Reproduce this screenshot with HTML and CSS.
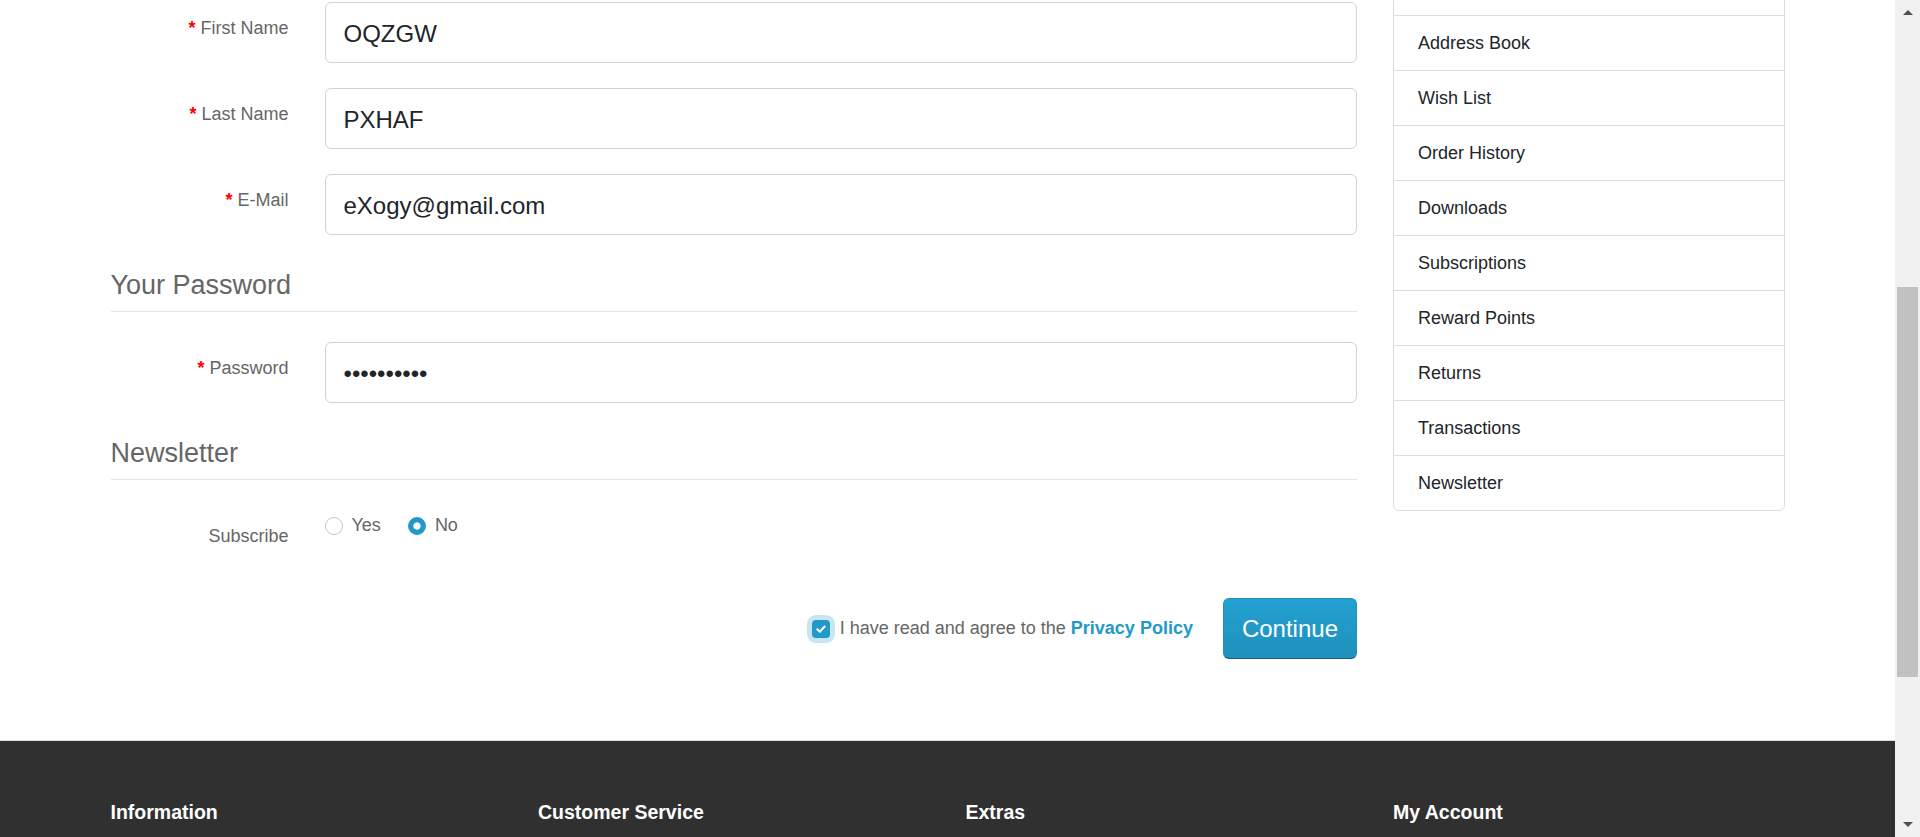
FILE: index.html
```html
<!DOCTYPE html>
<html lang="en">
<head>
<meta charset="utf-8">
<title>Register Account</title>
<link rel="stylesheet" href="styles.css">
</head>
<body>
<div class="screen">
  <div class="page">
    <div class="container">
      <div class="layout">
        <div class="content">
          <form class="form">
            <div class="form-row required">
              <label class="col-label" for="input-firstname">First Name</label>
              <div class="col-field"><input id="input-firstname" class="form-control" type="text" value="OQZGW"></div>
            </div>
            <div class="form-row required">
              <label class="col-label" for="input-lastname">Last Name</label>
              <div class="col-field"><input id="input-lastname" class="form-control" type="text" value="PXHAF"></div>
            </div>
            <div class="form-row required">
              <label class="col-label" for="input-email">E-Mail</label>
              <div class="col-field"><input id="input-email" class="form-control" type="text" value="eXogy@gmail.com"></div>
            </div>

            <h2 class="legend">Your Password</h2>
            <div class="form-row required">
              <label class="col-label" for="input-password">Password</label>
              <div class="col-field"><input id="input-password" class="form-control" type="password" value="abcdefghij"></div>
            </div>

            <h2 class="legend">Newsletter</h2>
            <div class="form-row form-row-radio">
              <span class="col-label">Subscribe</span>
              <div class="col-field radio-group">
                <label class="form-check"><input type="radio" name="newsletter" value="1"><span>Yes</span></label>
                <label class="form-check"><input type="radio" name="newsletter" value="0" checked><span>No</span></label>
              </div>
            </div>

            <div class="agree">
              <span class="agree-check">
                <svg width="12" height="12" viewBox="0 0 12 12"><polyline points="2.3,6.3 4.8,8.7 9.7,3.5" fill="none" stroke="#fff" stroke-width="2" stroke-linecap="round" stroke-linejoin="round"/></svg>
              </span>
              <span class="agree-text">I have read and agree to the <a href="#">Privacy Policy</a></span>
              <button type="button" class="btn-primary">Continue</button>
            </div>
          </form>
        </div>

        <aside class="sidebar">
          <nav class="list-group">
            <a class="list-item" href="#">My Account</a>
            <a class="list-item" href="#">Address Book</a>
            <a class="list-item" href="#">Wish List</a>
            <a class="list-item" href="#">Order History</a>
            <a class="list-item" href="#">Downloads</a>
            <a class="list-item" href="#">Subscriptions</a>
            <a class="list-item" href="#">Reward Points</a>
            <a class="list-item" href="#">Returns</a>
            <a class="list-item" href="#">Transactions</a>
            <a class="list-item" href="#">Newsletter</a>
          </nav>
        </aside>
      </div>
    </div>

    <footer class="footer">
      <div class="container footer-grid">
        <div class="footer-col">
          <h5>Information</h5>
        </div>
        <div class="footer-col">
          <h5>Customer Service</h5>
        </div>
        <div class="footer-col">
          <h5>Extras</h5>
        </div>
        <div class="footer-col">
          <h5>My Account</h5>
        </div>
      </div>
    </footer>
  </div>

  <div class="scrollbar">
    <div class="sb-btn"><span class="arrow-up"></span></div>
    <div class="sb-track"><div class="sb-thumb"></div></div>
    <div class="sb-btn"><span class="arrow-down"></span></div>
  </div>
</div>
</body>
</html>
```

FILE: styles.css
```css
html, body {
  margin: 0;
  height: 100%;
  overflow: hidden;
}

body {
  font-family: "Liberation Sans", Arial, sans-serif;
  font-size: 18px;
  line-height: 1.5;
  color: #666;
  background: #fff;
}

.screen {
  display: flex;
  height: 837px;
}

.page {
  flex: 1;
  min-width: 0;
  overflow: hidden;
}

.container {
  width: 1674px;
  margin: 0 auto;
}

.layout {
  display: grid;
  grid-template-columns: 1fr 391.5px;
  column-gap: 36px;
  align-items: start;
}

.content {
  padding-top: 2px;
  padding-bottom: 81px;
}

.form {
  margin: 0;
}

.form-row {
  display: grid;
  grid-template-columns: 178px 1fr;
  column-gap: 36px;
  margin-bottom: 25px;
}

.form-row-radio {
  height: 39px;
}

.col-label {
  text-align: right;
  padding-top: 13px;
  line-height: 27px;
  color: #666;
}

.required .col-label::before {
  content: "* ";
  color: #f00;
  font-weight: bold;
}

.form-control {
  display: block;
  width: 100%;
  box-sizing: border-box;
  height: 61px;
  margin: 0;
  padding: 13px 18px 10px;
  font-family: "Liberation Sans", Arial, sans-serif;
  font-size: 24px;
  line-height: 36px;
  color: #212529;
  background: #fff;
  border: 1px solid #ced4da;
  border-radius: 6px;
  outline: none;
}

.legend {
  margin: 0 0 30px;
  padding: 9px 0;
  font-size: 27px;
  line-height: 33px;
  font-weight: normal;
  color: #666;
  border-bottom: 1px solid #e5e5e5;
}

.radio-group {
  display: flex;
  padding-top: 2px;
  line-height: 27px;
}

.form-check {
  display: flex;
  align-items: flex-start;
  margin-right: 27px;
  color: #666;
}

.form-check input {
  -webkit-appearance: none;
  appearance: none;
  box-sizing: border-box;
  width: 18px;
  height: 18px;
  margin: 4.5px 9px 0 0;
  border: 1px solid #c4c4c4;
  border-radius: 50%;
  background: #fff;
}

.form-check input:checked {
  border-color: #229ac8;
  background: radial-gradient(circle, #fff 0 3.3px, #229ac8 4px);
}

.agree {
  display: flex;
  justify-content: flex-end;
  align-items: center;
  padding-top: 24px;
}

.agree-check {
  display: flex;
  align-items: center;
  justify-content: center;
  width: 18px;
  height: 18px;
  border-radius: 4px;
  background: #229ac8;
  box-shadow: 0 0 0 5px rgba(34, 154, 200, 0.25);
  margin-right: 10px;
}

.agree-text {
  line-height: 27px;
  color: #666;
  margin-right: 30px;
}

.agree-text a {
  color: #229ac8;
  font-weight: bold;
  text-decoration: none;
}

.btn-primary {
  height: 61px;
  padding: 0 18px;
  font-family: "Liberation Sans", Arial, sans-serif;
  font-size: 24px;
  color: #fff;
  background: linear-gradient(to bottom, #23a1d1, #1f90bb);
  border: 1px solid #1f90bb;
  border-bottom-color: #145e7a;
  border-radius: 6px;
}

.list-group {
  display: flex;
  flex-direction: column;
  margin-top: -40px;
  border: 1px solid #ddd;
  border-radius: 6px;
}

.list-item {
  display: block;
  padding: 14px 24px 13px;
  line-height: 27px;
  color: #212529;
  text-decoration: none;
  border-top: 1px solid #ddd;
}

.list-item:first-child {
  border-top: 0;
}

.footer {
  border-top: 1px solid #ddd;
  background: #303030;
  color: #e2e2e2;
  padding-top: 45px;
  height: 300px;
}

.footer-grid {
  display: grid;
  grid-template-columns: repeat(4, 1fr);
  column-gap: 36px;
}

.footer-col h5 {
  margin: 15px 0 15px;
  font-size: 19.5px;
  line-height: 1.2;
  font-weight: bold;
  color: #fff;
}

.scrollbar {
  width: 25px;
  flex: 0 0 25px;
  display: flex;
  flex-direction: column;
  background: #f1f1f1;
}

.sb-btn {
  height: 25px;
  display: flex;
  align-items: center;
  justify-content: center;
}

.arrow-up {
  width: 0;
  height: 0;
  border-left: 5px solid transparent;
  border-right: 5px solid transparent;
  border-bottom: 5px solid #505050;
}

.arrow-down {
  width: 0;
  height: 0;
  border-left: 5px solid transparent;
  border-right: 5px solid transparent;
  border-top: 5px solid #505050;
}

.sb-track {
  flex: 1;
  padding: 0 2px;
}

.sb-thumb {
  margin-top: 262px;
  height: 390px;
  background: #c1c1c1;
}
```
